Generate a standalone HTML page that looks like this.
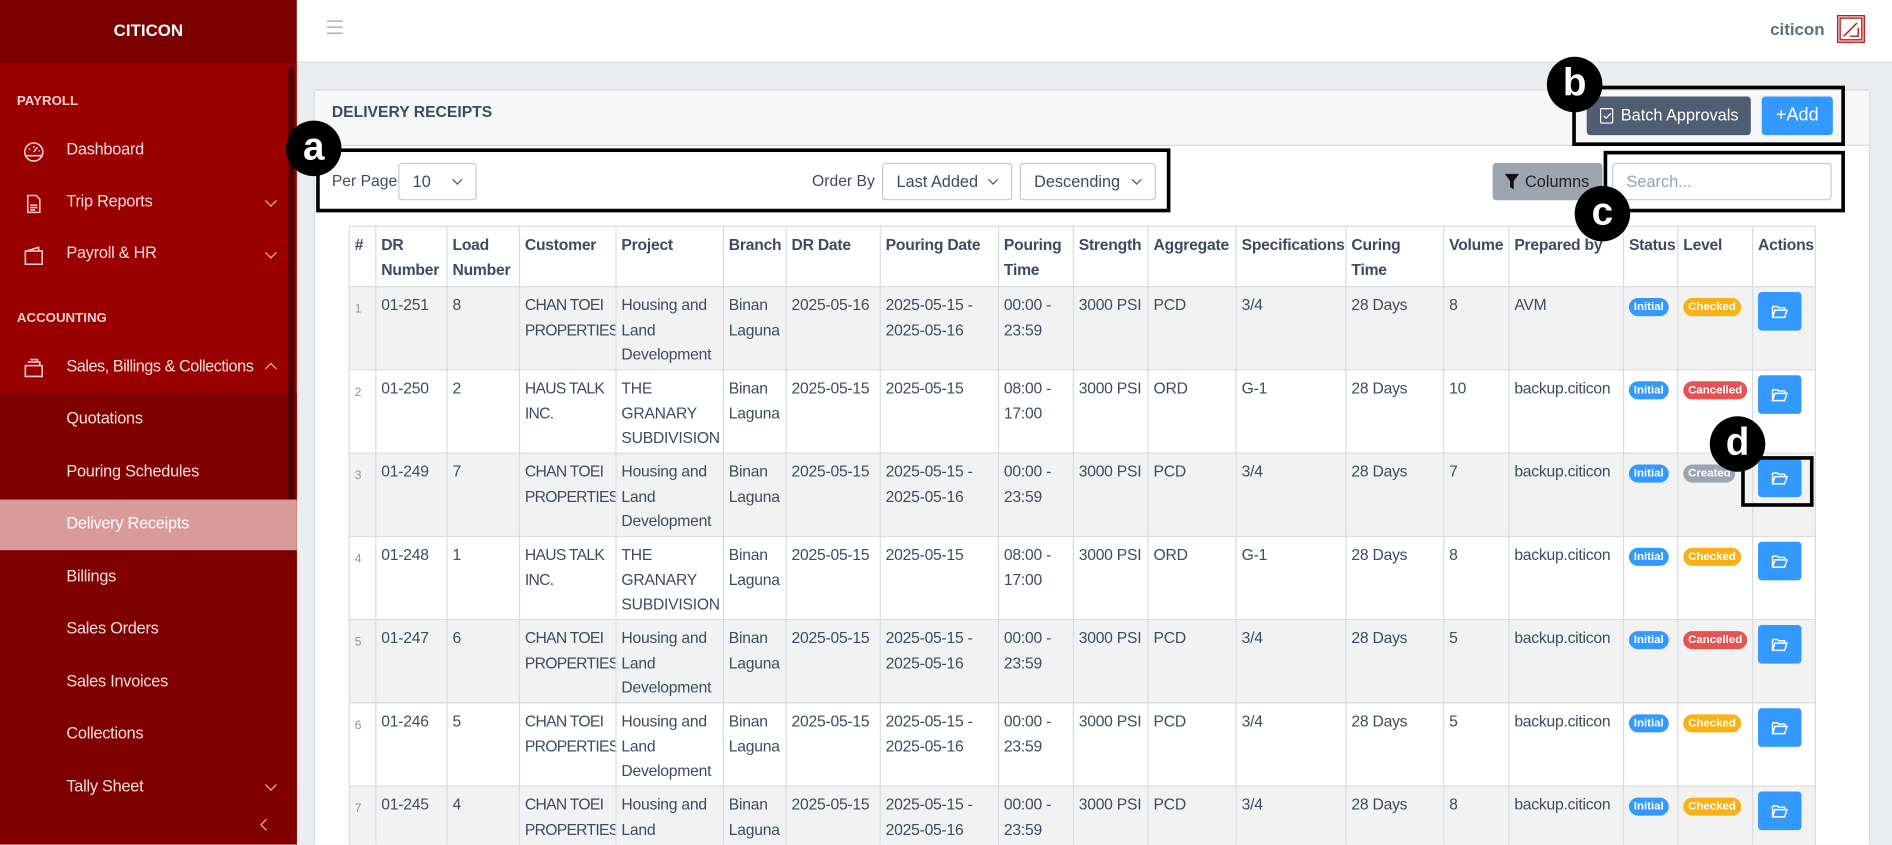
<!DOCTYPE html>
<html><head><meta charset="utf-8"><style>
*{box-sizing:border-box;margin:0;padding:0}
html,body{width:1892px;height:845px;overflow:hidden;background:#ebedef}
#w{width:1568px;height:700px;transform:scale(1.20663);transform-origin:0 0;position:relative;font-family:"Liberation Sans",sans-serif;color:#3c4b64;overflow:hidden}
.sb{position:absolute;left:0;top:0;width:246px;height:700px;background:#9a0000}
.sbh{position:absolute;left:0;top:0;width:246px;height:52px;background:#7b0000;color:#fff;font-weight:bold;font-size:14px;text-align:center;line-height:50px}
.sub{position:absolute;left:0;top:326px;width:246px;height:374px;background:#800000}
.sec{position:absolute;left:14px;font-size:11px;font-weight:bold;color:#f3d0d0}
.it{position:absolute;left:55px;font-size:13.5px;color:#f5dede;letter-spacing:-0.2px}
.ic{position:absolute;left:19px;width:18px;height:18px}
.chev{position:absolute;left:221px;width:7px;height:7px;border-right:1.3px solid #e8b0b0;border-bottom:1.3px solid #e8b0b0;transform:rotate(45deg)}
.tb{position:absolute;left:246px;top:0;width:1322px;height:52px;background:#fff;border-bottom:1px solid #d8dbe0}
.card{position:absolute;left:260px;top:74px;width:1290px;height:640px;background:#fff;border:1px solid #d8dbe0;border-radius:3px}
.ch{position:absolute;left:0;top:0;width:100%;height:46px;background:#f7f7f7;border-bottom:1px solid #d8dbe0}
.btn{position:absolute;border-radius:3px;color:#fff;font-size:13.5px;text-align:center}
.sel{position:absolute;top:135px;height:31px;border:1px solid #c4c9d0;border-radius:3px;background:#fff;font-size:13.5px;color:#3c4b64;line-height:30px;padding-left:11px}
.sel i{position:absolute;right:12px;top:10px;width:6px;height:6px;border-right:1.2px solid #555;border-bottom:1.2px solid #555;transform:rotate(45deg)}
.box{position:absolute;border:3px solid #000}
.circ{position:absolute;width:46px;height:46px;border-radius:50%;background:#000;color:#fff;font-weight:bold;font-size:32px;text-align:center;line-height:42px}
table{position:absolute;left:289px;top:187px;border-collapse:collapse;font-size:13px;color:#3c4b64;table-layout:fixed;width:1216px;letter-spacing:-0.2px}
td,th{border:1px solid #d8dbe0;padding:5px 4px 0 4px;vertical-align:top;text-align:left;line-height:20.7px;white-space:nowrap;overflow:hidden}
td:nth-child(4){letter-spacing:-0.6px}
th{font-weight:bold;height:50px}
tbody tr{height:69px}
tbody tr:nth-child(odd){background:#f2f2f3}
td:first-child{font-size:10px;color:#8a93a2;padding-top:9px}
.bd{display:inline-block;border-radius:9px;color:#fff;font-size:9.5px;font-weight:bold;padding:0 4px;line-height:15px;margin-top:2px;letter-spacing:0}
.ab{display:block;width:36px;height:32px;background:#3399ff;border-radius:3px;margin-top:-1px;position:relative}
.ab svg{position:absolute;left:11px;top:10px}
</style></head><body><div id="w">
<div class="sb">
<div class="sub"></div>
<div class="sbh">CITICON</div>
<div style="position:absolute;left:239px;top:55px;width:5px;height:370px;background:#4a0000;border-radius:3px"></div>
<div class="sec" style="top:78px">PAYROLL</div>
<svg class="ic" style="top:117px" viewBox="0 0 18 18" fill="none" stroke="#f3d0d0" stroke-width="1.3"><circle cx="9" cy="9" r="7.5"/><path d="M2 12h14M9 9l3-4M5 6l1 1M9 4v1.5M13 8h1"/></svg>
<div class="it" style="top:116px">Dashboard</div>
<svg class="ic" style="top:160px" viewBox="0 0 18 18" fill="none" stroke="#f3d0d0" stroke-width="1.3"><path d="M4 2h7l3 3v11H4z M6 10h6M6 12h6M6 14h4"/></svg>
<div class="it" style="top:159px">Trip Reports</div><div class="chev" style="top:163px"></div>
<svg class="ic" style="top:203px" viewBox="0 0 18 18" fill="none" stroke="#f3d0d0" stroke-width="1.3"><path d="M2 5h14v11H2z M3 5l10-3v3"/></svg>
<div class="it" style="top:202px">Payroll &amp; HR</div><div class="chev" style="top:206px"></div>
<div class="sec" style="top:258px">ACCOUNTING</div>
<svg class="ic" style="top:296px" viewBox="0 0 18 18" fill="none" stroke="#f3d0d0" stroke-width="1.3"><path d="M2 7h14v9H2z M4 4h10v3M6 2h6v2"/></svg>
<div class="it" style="top:296px;letter-spacing:-0.4px">Sales, Billings &amp; Collections</div><div class="chev" style="top:302px;transform:rotate(225deg)"></div>
<div class="it" style="top:339px">Quotations</div>
<div class="it" style="top:383px">Pouring Schedules</div>
<div style="position:absolute;left:0;top:414px;width:246px;height:42px;background:#d99a9a"></div>
<div class="it" style="top:426px;color:#fff">Delivery Receipts</div>
<div class="it" style="top:470px">Billings</div>
<div class="it" style="top:513px">Sales Orders</div>
<div class="it" style="top:557px">Sales Invoices</div>
<div class="it" style="top:600px">Collections</div>
<div class="it" style="top:644px">Tally Sheet</div><div class="chev" style="top:647px"></div>
<div style="position:absolute;left:217px;top:680px;width:7px;height:7px;border-left:1.5px solid #e8b0b0;border-bottom:1.5px solid #e8b0b0;transform:rotate(45deg)"></div>
</div>
<div class="tb">
<div style="position:absolute;left:25px;top:17px;width:13px;font-size:0">
<div style="height:1.4px;background:#9aa0a8;margin-bottom:3.5px"></div><div style="height:1.4px;background:#9aa0a8;margin-bottom:3.5px"></div><div style="height:1.4px;background:#9aa0a8"></div></div>
<div style="position:absolute;left:1221px;top:16px;font-size:14px;font-weight:bold;color:#636f83">citicon</div>
<svg style="position:absolute;left:1276px;top:12px" width="24" height="24" viewBox="0 0 24 24" fill="none" stroke="#b22" stroke-width="1.2"><rect x="1" y="1" width="22" height="22"/><rect x="3" y="3" width="18" height="18"/><path d="M6 18L17 7M11 18h7V11"/></svg>
</div>
<div class="card"><div class="ch"><div style="position:absolute;left:14px;top:10px;font-size:13px;font-weight:bold;color:#3c4b64">DELIVERY RECEIPTS</div></div></div>
<div class="btn" style="left:1315px;top:80px;width:136px;height:32px;background:#4f5d73;line-height:32px;padding-left:18px">Batch Approvals</div>
<svg style="position:absolute;left:1325px;top:89px" width="13" height="14" viewBox="0 0 13 14" fill="none" stroke="#fff" stroke-width="1"><rect x="1.5" y="1" width="10" height="12" rx="1"/><path d="M4 7l2 2 4-4"/></svg>
<div class="btn" style="left:1460px;top:80px;width:59px;height:32px;background:#3399ff;line-height:32px;font-size:15px">+Add</div>
<div style="position:absolute;left:275px;top:142px;font-size:13px">Per Page</div>
<div class="sel" style="left:330px;width:65px">10<i></i></div>
<div style="position:absolute;left:673px;top:142px;font-size:13px">Order By</div>
<div class="sel" style="left:731px;width:108px">Last Added<i></i></div>
<div class="sel" style="left:845px;width:113px">Descending<i></i></div>
<div class="btn" style="left:1237px;top:135px;width:91px;height:31px;background:#9da5b1;line-height:31px;color:#222;padding-left:16px">Columns</div>
<svg style="position:absolute;left:1247px;top:144px" width="12" height="13" viewBox="0 0 12 13"><path d="M0 0h12L7.5 6v7L4.5 11V6z" fill="#111"/></svg>
<div class="sel" style="left:1336px;width:182px;color:#9aa0aa">Search...</div>
<table>
<colgroup><col style="width:22px"><col style="width:59px"><col style="width:60px"><col style="width:80px"><col style="width:89px"><col style="width:52px"><col style="width:78px"><col style="width:98px"><col style="width:62px"><col style="width:62px"><col style="width:73px"><col style="width:91px"><col style="width:81px"><col style="width:54px"><col style="width:95px"><col style="width:45px"><col style="width:62px"><col style="width:52px"></colgroup>
<thead><tr><th>#</th><th>DR<br>Number</th><th>Load<br>Number</th><th>Customer</th><th>Project</th><th>Branch</th><th>DR Date</th><th>Pouring Date</th><th>Pouring<br>Time</th><th>Strength</th><th>Aggregate</th><th>Specifications</th><th>Curing<br>Time</th><th>Volume</th><th>Prepared by</th><th>Status</th><th>Level</th><th>Actions</th></tr></thead>
<tbody>
<tr><td>1</td><td>01-251</td><td>8</td><td>CHAN TOEI<br>PROPERTIES</td><td>Housing and<br>Land<br>Development</td><td>Binan<br>Laguna</td><td>2025-05-16</td><td>2025-05-15 -<br>2025-05-16</td><td>00:00 -<br>23:59</td><td>3000 PSI</td><td>PCD</td><td>3/4</td><td>28 Days</td><td>8</td><td>AVM</td><td><span class="bd" style="background:#3399ff">Initial</span></td><td><span class="bd" style="background:#f9b115">Checked</span></td><td><span class="ab"><svg width="14" height="12" viewBox="0 0 14 12" fill="none" stroke="#fff" stroke-width="1.2"><path d="M1 2h4l1 1h5v2M1 2v9h10l2-6H3L1 11"/></svg></span></td></tr>
<tr><td>2</td><td>01-250</td><td>2</td><td>HAUS TALK<br>INC.</td><td>THE<br>GRANARY<br>SUBDIVISION</td><td>Binan<br>Laguna</td><td>2025-05-15</td><td>2025-05-15</td><td>08:00 -<br>17:00</td><td>3000 PSI</td><td>ORD</td><td>G-1</td><td>28 Days</td><td>10</td><td>backup.citicon</td><td><span class="bd" style="background:#3399ff">Initial</span></td><td><span class="bd" style="background:#e55353">Cancelled</span></td><td><span class="ab"><svg width="14" height="12" viewBox="0 0 14 12" fill="none" stroke="#fff" stroke-width="1.2"><path d="M1 2h4l1 1h5v2M1 2v9h10l2-6H3L1 11"/></svg></span></td></tr>
<tr><td>3</td><td>01-249</td><td>7</td><td>CHAN TOEI<br>PROPERTIES</td><td>Housing and<br>Land<br>Development</td><td>Binan<br>Laguna</td><td>2025-05-15</td><td>2025-05-15 -<br>2025-05-16</td><td>00:00 -<br>23:59</td><td>3000 PSI</td><td>PCD</td><td>3/4</td><td>28 Days</td><td>7</td><td>backup.citicon</td><td><span class="bd" style="background:#3399ff">Initial</span></td><td><span class="bd" style="background:#9da5b1">Created</span></td><td><span class="ab"><svg width="14" height="12" viewBox="0 0 14 12" fill="none" stroke="#fff" stroke-width="1.2"><path d="M1 2h4l1 1h5v2M1 2v9h10l2-6H3L1 11"/></svg></span></td></tr>
<tr><td>4</td><td>01-248</td><td>1</td><td>HAUS TALK<br>INC.</td><td>THE<br>GRANARY<br>SUBDIVISION</td><td>Binan<br>Laguna</td><td>2025-05-15</td><td>2025-05-15</td><td>08:00 -<br>17:00</td><td>3000 PSI</td><td>ORD</td><td>G-1</td><td>28 Days</td><td>8</td><td>backup.citicon</td><td><span class="bd" style="background:#3399ff">Initial</span></td><td><span class="bd" style="background:#f9b115">Checked</span></td><td><span class="ab"><svg width="14" height="12" viewBox="0 0 14 12" fill="none" stroke="#fff" stroke-width="1.2"><path d="M1 2h4l1 1h5v2M1 2v9h10l2-6H3L1 11"/></svg></span></td></tr>
<tr><td>5</td><td>01-247</td><td>6</td><td>CHAN TOEI<br>PROPERTIES</td><td>Housing and<br>Land<br>Development</td><td>Binan<br>Laguna</td><td>2025-05-15</td><td>2025-05-15 -<br>2025-05-16</td><td>00:00 -<br>23:59</td><td>3000 PSI</td><td>PCD</td><td>3/4</td><td>28 Days</td><td>5</td><td>backup.citicon</td><td><span class="bd" style="background:#3399ff">Initial</span></td><td><span class="bd" style="background:#e55353">Cancelled</span></td><td><span class="ab"><svg width="14" height="12" viewBox="0 0 14 12" fill="none" stroke="#fff" stroke-width="1.2"><path d="M1 2h4l1 1h5v2M1 2v9h10l2-6H3L1 11"/></svg></span></td></tr>
<tr><td>6</td><td>01-246</td><td>5</td><td>CHAN TOEI<br>PROPERTIES</td><td>Housing and<br>Land<br>Development</td><td>Binan<br>Laguna</td><td>2025-05-15</td><td>2025-05-15 -<br>2025-05-16</td><td>00:00 -<br>23:59</td><td>3000 PSI</td><td>PCD</td><td>3/4</td><td>28 Days</td><td>5</td><td>backup.citicon</td><td><span class="bd" style="background:#3399ff">Initial</span></td><td><span class="bd" style="background:#f9b115">Checked</span></td><td><span class="ab"><svg width="14" height="12" viewBox="0 0 14 12" fill="none" stroke="#fff" stroke-width="1.2"><path d="M1 2h4l1 1h5v2M1 2v9h10l2-6H3L1 11"/></svg></span></td></tr>
<tr><td>7</td><td>01-245</td><td>4</td><td>CHAN TOEI<br>PROPERTIES</td><td>Housing and<br>Land<br>Development</td><td>Binan<br>Laguna</td><td>2025-05-15</td><td>2025-05-15 -<br>2025-05-16</td><td>00:00 -<br>23:59</td><td>3000 PSI</td><td>PCD</td><td>3/4</td><td>28 Days</td><td>8</td><td>backup.citicon</td><td><span class="bd" style="background:#3399ff">Initial</span></td><td><span class="bd" style="background:#f9b115">Checked</span></td><td><span class="ab"><svg width="14" height="12" viewBox="0 0 14 12" fill="none" stroke="#fff" stroke-width="1.2"><path d="M1 2h4l1 1h5v2M1 2v9h10l2-6H3L1 11"/></svg></span></td></tr>
</tbody></table>
<div class="box" style="left:262px;top:123px;width:708px;height:53px"></div>
<div class="circ" style="left:237px;top:100px">a</div>
<div class="box" style="left:1303px;top:71px;width:226px;height:50px"></div>
<div class="circ" style="left:1282px;top:47px">b</div>
<div class="box" style="left:1329px;top:125px;width:200px;height:51px"></div>
<div class="circ" style="left:1305px;top:154px">c</div>
<div class="box" style="left:1443px;top:378px;width:60px;height:42px"></div>
<div class="circ" style="left:1417px;top:345px">d</div>
</div></body></html>
